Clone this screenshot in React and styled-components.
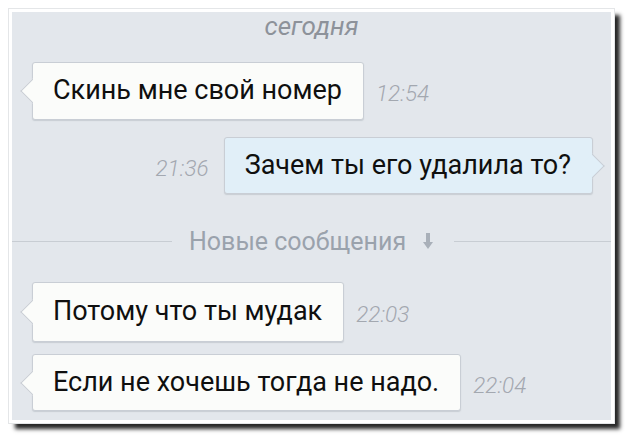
import React from "react";
import styled, { createGlobalStyle } from "styled-components";

const Global = createGlobalStyle`
  html, body { margin: 0; padding: 0; background: #ffffff; }
  body { font-family: Roboto, "Noto Sans", sans-serif; }
`;

const Page = styled.div`
  width: 625px;
  height: 436px;
  padding: 9px 0 0 9px;
  box-sizing: border-box;
  background: #ffffff;
`;

const Panel = styled.div`
  width: 605px;
  height: 414px;
  box-sizing: border-box;
  border: 3px solid #ffffff;
  background: #e3e7ec;
  box-shadow: 0 0 0 1px #e4e6e8, 6px 6px 4px rgba(0, 0, 0, 0.85);
  display: flex;
  flex-direction: column;
  overflow: hidden;
`;

const DateLabel = styled.div`
  margin-top: 0;
  text-align: center;
  font-style: italic;
  font-size: 26px;
  line-height: 28px;
  color: #8d929a;
`;

const Row = styled.div`
  display: flex;
  align-items: center;
  justify-content: ${(p) => (p.$out ? "flex-end" : "flex-start")};
  margin-top: ${(p) => p.$gap}px;
  padding: ${(p) => (p.$out ? "0 18px 0 0" : "0 0 0 20px")};
`;

const Bubble = styled.div`
  position: relative;
  box-sizing: border-box;
  height: ${(p) => p.$h || 58}px;
  display: flex;
  align-items: center;
  padding: 0 21px 2px 20px;
  border: 1px solid #c9ced5;
  border-radius: 3px;
  background: ${(p) => (p.$out ? "#e1eff8" : "#fbfcfa")};
  box-shadow: 0 1px 1px rgba(120, 130, 140, 0.25);
  font-size: 27px;
  color: #0f0f0f;
  white-space: nowrap;

  &::before {
    content: "";
    position: absolute;
    top: 50%;
    ${(p) => (p.$out ? "right: -9px;" : "left: -9px;")}
    width: 16px;
    height: 16px;
    margin-top: -9px;
    background: inherit;
    border: 1px solid #c9ced5;
    ${(p) =>
      p.$out
        ? "border-left-color: transparent; border-bottom-color: transparent;"
        : "border-right-color: transparent; border-top-color: transparent;"}
    transform: rotate(45deg);
  }
`;

const Time = styled.span`
  font-style: italic;
  font-weight: 300;
  font-size: 22.5px;
  color: #a3a8b0;
  margin: ${(p) => (p.$out ? "4px 15px 0 0" : "4px 0 0 12px")};
`;

const Divider = styled.div`
  display: flex;
  align-items: center;
  margin-top: 34px;
  height: 26px;
  color: #9aa2ac;
  font-size: 25px;
`;

const Line = styled.div`
  height: 1px;
  background: #c8cdd3;
  flex: ${(p) => (p.$grow ? "1" : "none")};
  width: ${(p) => (p.$grow ? "auto" : "160px")};
`;

const DividerText = styled.span`
  margin: 0 17px;
`;

const Arrow = styled.svg`
  width: 10px;
  height: 17px;
  margin-right: 21px;
`;

const Message = ({ out, gap, time, h, children }) => (
  <Row $out={out} $gap={gap}>
    {out && <Time $out>{time}</Time>}
    <Bubble $out={out} $h={h}>{children}</Bubble>
    {!out && <Time>{time}</Time>}
  </Row>
);

export default function App() {
  return (
    <>
      <Global />
      <Page>
        <Panel>
          <DateLabel>сегодня</DateLabel>
          <Message gap={22} time="12:54">Скинь мне свой номер</Message>
          <Message out gap={17} h={57} time="21:36">Зачем ты его удалила то?</Message>
          <Divider>
            <Line />
            <DividerText>Новые сообщения</DividerText>
            <Arrow viewBox="0 0 10 17">
              <rect x="3" y="0" width="4" height="10" fill="#a9b0b9" />
              <path d="M0 9 L10 9 L5 16 Z" fill="#a9b0b9" />
            </Arrow>
            <Line $grow />
          </Divider>
          <Message gap={28} h={60} time="22:03">Потому что ты мудак</Message>
          <Message gap={12} h={57} time="22:04">Если не хочешь тогда не надо.</Message>
        </Panel>
      </Page>
    </>
  );
}
